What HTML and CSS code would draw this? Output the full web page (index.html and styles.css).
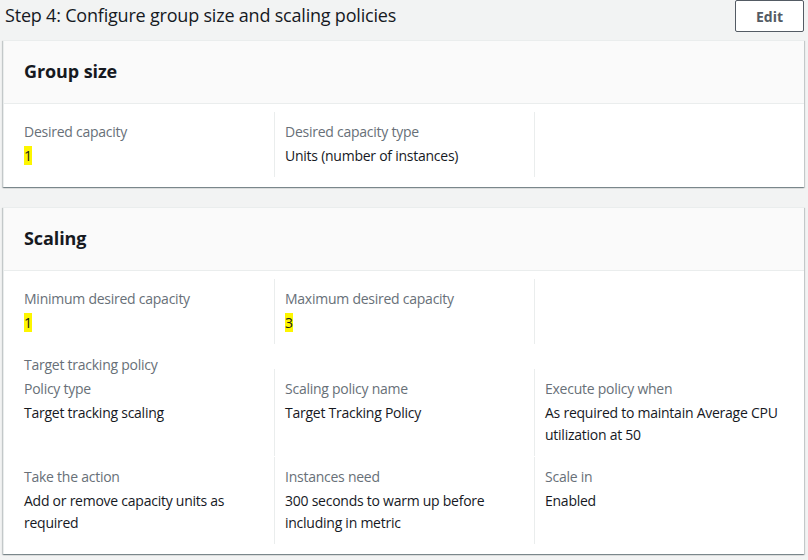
FILE: index.html
```html
<!DOCTYPE html>
<html>
<head>
<meta charset="utf-8">
<link rel="stylesheet" href="styles.css">
</head>
<body>
<div class="page">
  <div class="topbar">
    <h2 class="title">Step 4: Configure group size and scaling policies</h2>
    <button class="btn">Edit</button>
  </div>

  <section class="card">
    <div class="card-header"><h3>Group size</h3></div>
    <div class="card-body">
      <div class="grid">
        <div class="cell">
          <div class="label">Desired capacity</div>
          <div class="value"><span class="hl">1</span></div>
        </div>
        <div class="cell">
          <div class="label">Desired capacity type</div>
          <div class="value">Units (number of instances)</div>
        </div>
        <div class="cell"></div>
      </div>
    </div>
  </section>

  <section class="card">
    <div class="card-header"><h3>Scaling</h3></div>
    <div class="card-body">
      <div class="grid">
        <div class="cell">
          <div class="label">Minimum desired capacity</div>
          <div class="value"><span class="hl">1</span></div>
        </div>
        <div class="cell">
          <div class="label">Maximum desired capacity</div>
          <div class="value"><span class="hl">3</span></div>
        </div>
        <div class="cell"></div>
      </div>
      <div class="subhead">Target tracking policy</div>
      <div class="grid grid-rows">
        <div class="cell">
          <div class="label">Policy type</div>
          <div class="value">Target tracking scaling</div>
        </div>
        <div class="cell">
          <div class="label">Scaling policy name</div>
          <div class="value">Target Tracking Policy</div>
        </div>
        <div class="cell">
          <div class="label">Execute policy when</div>
          <div class="value">As required to maintain Average CPU utilization at 50</div>
        </div>
        <div class="cell">
          <div class="label">Take the action</div>
          <div class="value">Add or remove capacity units as required</div>
        </div>
        <div class="cell">
          <div class="label">Instances need</div>
          <div class="value">300 seconds to warm up before including in metric</div>
        </div>
        <div class="cell">
          <div class="label">Scale in</div>
          <div class="value">Enabled</div>
        </div>
      </div>
    </div>
  </section>
</div>
</body>
</html>
```

FILE: styles.css
```css
* { box-sizing: border-box; }
html, body {
  margin: 0;
  background: #f2f3f3;
}
body {
  font-family: "Open Sans", "Noto Sans", Arial, sans-serif;
  color: #16191f;
  font-size: 14px;
  line-height: 22px;
  letter-spacing: -0.25px;
}
.page {
  padding: 0 4px 0 3px;
}
.topbar {
  display: flex;
  align-items: center;
  justify-content: space-between;
  height: 32px;
  margin-bottom: 8px;
}
.title {
  margin: 0 0 0 2px;
  padding-bottom: 2px;
  font-size: 18px;
  font-weight: 400;
  line-height: 24px;
  letter-spacing: -0.2px;
  color: #16191f;
}
.btn {
  width: 69px;
  height: 32px;
  border: 1px solid #545b64;
  border-radius: 2px;
  background: #fff;
  color: #545b64;
  font-family: inherit;
  font-size: 14px;
  font-weight: 700;
  letter-spacing: 0;
  padding: 0;
}
.card {
  background: #fff;
  border-top: 1px solid #eaeded;
  border-left: 1px solid #eaeded;
  box-shadow: 0 1px 1px 0 rgba(0,28,36,.3), 1px 1px 1px 0 rgba(0,28,36,.15), -1px 1px 1px 0 rgba(0,28,36,.15);
  margin-bottom: 20px;
}
.card-header {
  background: #fafafa;
  border-bottom: 1px solid #eaeded;
  height: 63px;
  display: flex;
  align-items: center;
  padding: 0 20px 2px;
}
.card-header h3 {
  margin: 0;
  font-size: 18px;
  font-weight: 700;
  line-height: 24px;
  letter-spacing: -0.1px;
}
.card-body {
  padding: 8px 10px 10px;
}
.grid {
  display: grid;
  grid-template-columns: repeat(3, 1fr);
}
.grid-rows {
  row-gap: 1px;
  margin-top: -7px;
}
.cell {
  padding: 9px 10px 10px;
  border-left: 1px solid #eaeded;
}
.cell:nth-child(3n+1) {
  border-left: 0;
}
.label {
  color: #687078;
}
.value {
  margin-top: 2px;
}
.hl {
  background: #fdf600;
}
.subhead {
  color: #687078;
  padding: 10px 10px 0;
}
```
